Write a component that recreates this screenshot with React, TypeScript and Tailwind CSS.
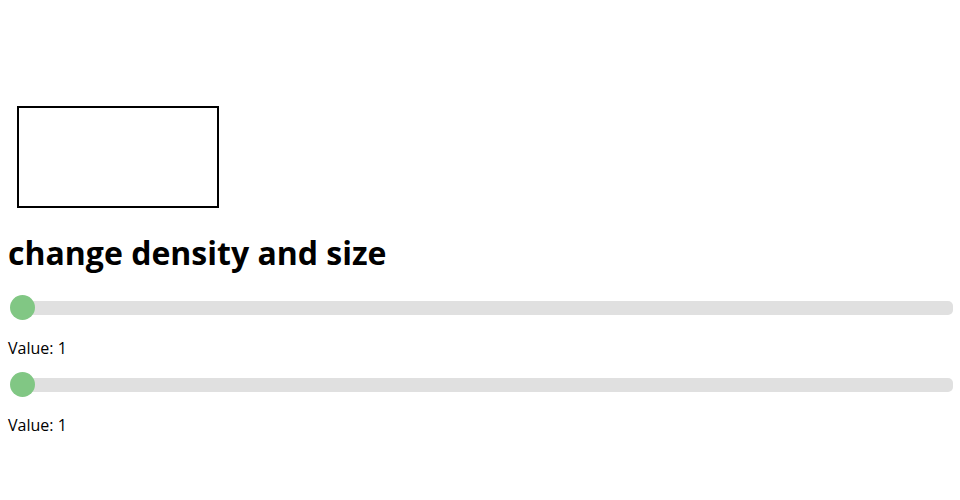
import React from 'react'

function Slider({ value }: { value: number }) {
  return (
    <div className="relative h-[25px] pt-[6px]">
      <div className="ml-[4px] h-[14px] rounded-[5px] bg-[#e0e0e0]" />
      <div
        className="absolute top-0 w-[25px] h-[25px] rounded-full bg-[#81c784]"
        style={{ left: `${2 + (value - 1) * 0}px` }}
      />
    </div>
  )
}

export default function App() {
  return (
    <div className="flex flex-col pl-2 pr-[7px] bg-white text-black font-['Open_Sans',sans-serif]">
      <div className="mt-[106px] ml-[9px] w-[202px] h-[102px] border-2 border-black" />
      <h1 className="mt-[25px] text-[32px] leading-[40px] font-bold">change density and size</h1>
      <div className="mt-[22px]">
        <Slider value={1} />
      </div>
      <p className="mt-[16px] text-[16px] leading-[24px]">Value: 1</p>
      <div className="mt-[12px]">
        <Slider value={1} />
      </div>
      <p className="mt-[16px] text-[16px] leading-[24px]">Value: 1</p>
    </div>
  )
}
